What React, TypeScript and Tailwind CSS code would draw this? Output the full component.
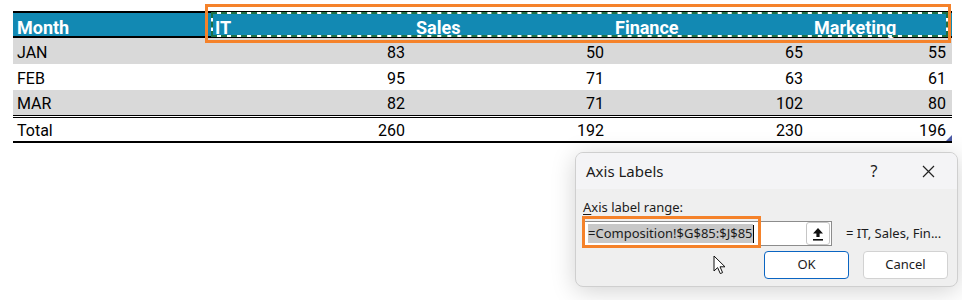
import React from 'react'

const HEAD = ['Month', 'IT', 'Sales', 'Finance', 'Marketing']

const ROWS: [string, number[]][] = [
  ['JAN', [83, 50, 65, 55]],
  ['FEB', [95, 71, 63, 61]],
  ['MAR', [82, 71, 102, 80]],
]

const TOTALS = [260, 192, 230, 196]

const cols = 'grid grid-cols-[194px_201px_199px_199px_146px]'
const sheetFont = { fontFamily: 'Roboto, "Liberation Sans", sans-serif' }
const uiFont = { fontFamily: '"Noto Sans", "Open Sans", sans-serif' }

function NumCell({ v, last }: { v: number; last?: boolean }) {
  return <div className={`text-right ${last ? 'pr-[6px]' : 'pr-[3px]'}`}>{v}</div>
}

function Sheet() {
  return (
    <div className="pt-[11px] pl-[13px] text-[16px] text-black" style={sheetFont}>
      <div className="w-[939px]">
        <div className={`${cols} h-[27px] items-center pt-px border-y-2 border-black bg-[#1289b3] text-[18px] font-bold text-white`}>
          {HEAD.map((h, i) => (
            <div key={h} className={i === 0 ? 'pl-[4px]' : 'pl-[8px]'}>{h}</div>
          ))}
        </div>
        {ROWS.map(([m, vals], r) => (
          <div key={m} className={`${cols} ${r === 2 ? 'h-[25px]' : 'h-[26px]'} items-end pb-[3px] leading-none ${r === 1 ? 'bg-white' : 'bg-[#d9d9d9]'}`}>
            <div className="pl-[4px]">{m}</div>
            {vals.map((v, i) => <NumCell key={i} v={v} last={i === 3} />)}
          </div>
        ))}
        <div className="h-[3px] border-y border-black" />
        <div className={`${cols} relative h-[25px] items-end pb-[2px] leading-none border-b-2 border-black`}>
          <div className="pl-[4px]">Total</div>
          {TOTALS.map((v, i) => <NumCell key={i} v={v} last={i === 3} />)}
          {/* table resize handle */}
          <div className="absolute right-0 bottom-0 w-[6px] h-[6px] bg-[#4b5aa6] [clip-path:polygon(100%_0,100%_100%,0_100%)]" />
        </div>
      </div>
    </div>
  )
}

function UploadIcon() {
  return (
    <svg width="12" height="14" viewBox="0 0 12 14">
      <path d="M6 1 L11 6.5 H7.6 V10 H4.4 V6.5 H1 Z" fill="#111" />
      <rect x="1" y="12" width="10" height="1.6" fill="#111" />
    </svg>
  )
}

function Pointer() {
  return (
    <svg width="13" height="20" viewBox="0 0 13 20" className="absolute left-[713px] top-[255px]">
      <path d="M1 1 V16 L4.6 12.6 L7.3 18.6 L9.6 17.6 L7 11.8 H12 Z" fill="#fff" stroke="#111" strokeWidth="1" strokeLinejoin="round" />
    </svg>
  )
}

function Dialog() {
  return (
    <div
      className="absolute left-[575px] top-[152px] w-[383px] h-[135px] rounded-[8px] border border-[#cfcfcf] bg-[#efefef] shadow-[0_4px_24px_rgba(0,0,0,0.18)] overflow-hidden text-[#1b1b1b]"
      style={uiFont}
    >
      <div className="flex items-center h-[36px] bg-[#f4f4f6] pl-[10px] pr-[22px]">
        <span className="text-[15px] flex-1">Axis Labels</span>
        <span className="text-[16px] w-[20px] text-center mr-[38px]">?</span>
        <svg width="13" height="13" viewBox="0 0 13 13">
          <path d="M1 1 L12 12 M12 1 L1 12" stroke="#222" strokeWidth="1.2" />
        </svg>
      </div>
      <div className="pl-[7px] pr-[9px] pt-[10px]">
        <div className="text-[13px] leading-[16px] h-[20px]">
          <span className="underline underline-offset-2">A</span>xis label range:
        </div>
        <div className="flex items-center mt-[2px]">
          <div className="flex items-center w-[249px] h-[25px] bg-white border border-[#8c8c8c]">
            <div className="flex-1 flex items-center pl-[4px] text-[13px]">
              <span className="bg-[#c8c8c8] leading-[19px]">=Composition!$G$85:$J$85</span>
              <span className="w-px h-[18px] bg-black" />
            </div>
            <div className="flex items-center justify-center w-[24px] h-[23px] mr-[1px] rounded-[3px] border border-[#c6c6c6] bg-white">
              <UploadIcon />
            </div>
          </div>
          <span className="ml-[14px] text-[13px]">= IT, Sales, Fin...</span>
        </div>
        <div className="flex justify-end gap-[14px] mt-[5px]">
          <button className="w-[85px] h-[28px] rounded-[4px] border border-[#0a65c2] bg-white text-[13px]">OK</button>
          <button className="w-[85px] h-[28px] rounded-[4px] border border-[#d2d2d2] bg-white text-[13px]">Cancel</button>
        </div>
      </div>
      {/* highlight around the range box */}
      <div className="absolute left-[6px] top-[63px] w-[179px] h-[32px] border-[3px] border-[#f5822a]" />
    </div>
  )
}

export default function App() {
  return (
    <div className="relative w-[962px] h-[300px] bg-white overflow-hidden">
      <Sheet />
      {/* copy marquee over the header labels */}
      <div className="absolute left-[211px] top-[12px] w-[737px] h-[25px] border-2 border-white" />
      <div className="absolute left-[211px] top-[12px] w-[737px] h-[25px] border-2 border-dashed border-[#1e7145]" />
      <div className="absolute left-[205px] top-[4px] w-[746px] h-[39px] border-[3px] border-[#f5822a]" />
      <Dialog />
      <Pointer />
    </div>
  )
}
